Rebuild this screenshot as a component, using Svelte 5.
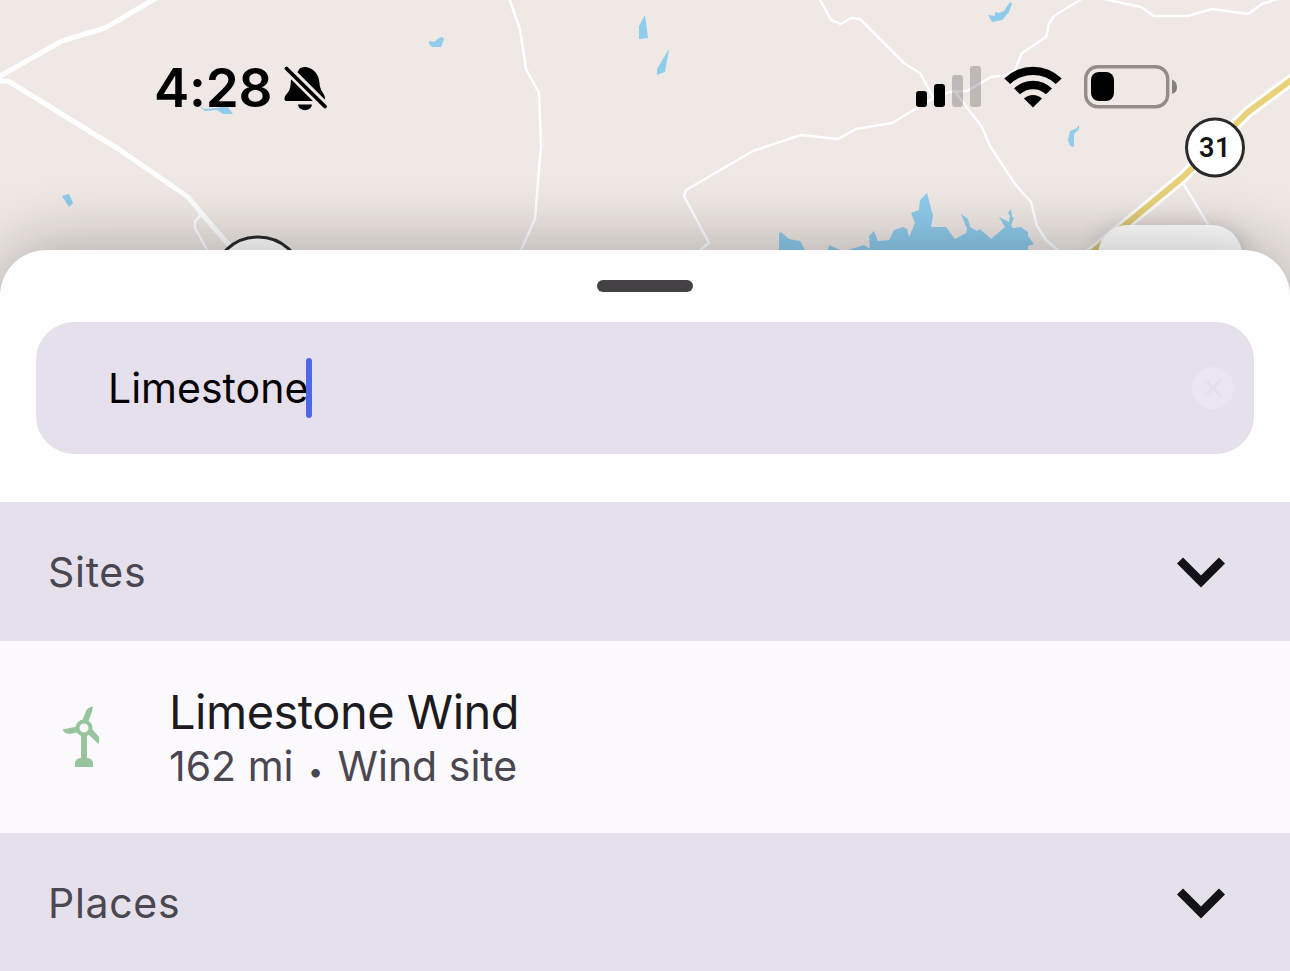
<script>
  const sections = [
    {
      title: 'Sites',
      items: [{ name: 'Limestone Wind', distance: '162 mi', kind: 'Wind site' }]
    },
    { title: 'Places', items: [] }
  ];
  let query = 'Limestone';
</script>

<div class="screen">
  <svg class="map" viewBox="0 0 1290 310" width="1290" height="310" aria-hidden="true">
    <rect width="1290" height="310" fill="#efe8e5" />
    <g fill="#8ecbec">
      <path d="M429 41l5 1 5-4 3-1 2 2-3 8h-9l-3-3z" />
      <path d="M645 15l-6 11v13l9-1z" />
      <path d="M669 49l-12 20v6l8-3z" />
      <path d="M988 15l7 1v-4l4 1 5-2 6-9 2 2-3 8-7 8-10 2z" />
      <path d="M199 106l6 3 12-1 10-2 6 8h-10l-6-4-12 1z" />
      <path d="M62 196l7-2 4 9-4 4z" />
      <path d="M1079 125v4l-5 5v13l-4-1-2-6 2-9 7-3z" />
      <path d="M779 250V233L781 232 789 239 800 241 805 250zM828 250L829 245 840 250z" />
      <path d="M848 250L864 245 870 249 869 236 874 231 878 241 889 240 894 230 903 227 907 229 909 237 915 223 911 213 919 210 920 200 927 193 933 216 931 227 946 227 955 239 966 233 967 229 961 214 968 219 970 227 977 231 980 229 991 239 1005 227 999 217 1009 222 1010 216 1008 213 1011 209 1012 216 1014 218 1011 225 1013 228 1021 227 1028 232V236L1034 244 1028 246V250z" />
    </g>
    <g fill="none" stroke="#fff" stroke-linejoin="round">
      <path stroke-width="5" d="M-5 79L62 41l43-13L158-3" />
      <path stroke-width="5" d="M-4 81H8L120 150l68 47 14 17 34 39" />
      <path stroke-width="2.5" d="M201 215l-6 6v7l13 24" />
      <path stroke-width="2.5" d="M509-2l11 31 6 40 13 24 2 52-6 74-14 31" />
      <path stroke-width="2.5" d="M699 251l10-8-25-47 2-6 67-39 48-16 37 4 18-10 36-6 40-24 17-7 18-1 24-14 15-2 9-5 7-17 24-16 3-13 5-8L1083-2" />
      <path stroke-width="2.5" d="M819-2l12 22 10 4 10-6 9 1 45 45 15 9 13 24" />
      <path stroke-width="2.5" d="M954 90l14 19 14 18 8 19 25 38 16 18 6 24 9 14 14 12" />
      <path stroke-width="2.5" d="M1104-1l37 8 13 9h34l24-7 36 5 14-10 16-5" />
      <path stroke-width="2.5" d="M1183 183l26 43" />
      <path stroke-width="12" d="M1090 254l93-77 65-65 46-34" />
    </g>
    <path d="M1090 254l93-77 65-65 46-34" fill="none" stroke="#e9d27a" stroke-width="6" />
    <g fill="#fff" stroke="#2a2a2c" stroke-width="3">
      <circle cx="1215" cy="147.500" r="28.500" />
      <ellipse cx="258" cy="277" rx="43" ry="40" />
    </g>
    <text class="route" x="1215" y="156.500">31</text>
  </svg>
  <div class="map-button"></div>

  <header class="status">
    <div class="left">
      <span class="time">4:28</span>
      <svg width="44" height="46" viewBox="0 0 44 46">
        <path d="M12 8.500C14 7 14.500 4.500 16.500 3a7.500 4.500 0 0 1 9 0c7 3 9.500 9 10 15 .3 8 5 10 5.500 15 0 2-1 3-2 3H3.500c-5 0-3-5 0-8 3-4 3-7 3.500-13z" />
        <path d="M14 39.500h14c-1 7.500-13 7.500-14 0z" />
        <path d="M2.500 3L41 41.500" stroke="#efe8e5" stroke-width="9.500" />
        <path d="M2.500 3.500L41 41.500" stroke="#000" stroke-width="3.800" stroke-linecap="round" />
      </svg>
    </div>
    <div class="right">
      <svg width="66" height="42" viewBox="0 0 66 42">
        <rect y="25" width="11" height="16" rx="3" />
        <rect x="18" y="18" width="11" height="23" rx="3" />
        <g opacity=".2">
          <rect x="36" y="9" width="11" height="32" rx="3" />
          <rect x="54" width="11" height="41" rx="3" />
        </g>
      </svg>
      <svg class="wifi" width="58" height="43" viewBox="0 0 58 43">
        <path d="M.3 13.500A41 41 0 0 1 57.700 13.500L51.800 19A33.500 33.500 0 0 0 6.200 19z" />
        <path d="M10 23.500A27 27 0 0 1 48 23.500L42 29.300A19 19 0 0 0 16 29.300z" />
        <path d="M20 33.500A13 13 0 0 1 38 33.500L29 42.500z" />
      </svg>
      <svg class="battery" width="94" height="44" viewBox="0 0 94 44">
        <rect x="1.700" y="1.700" width="82" height="40" rx="12" fill="none" stroke="#938d89" stroke-width="3.400" />
        <rect x="7" y="7" width="23" height="29" rx="8" />
        <path d="M88 14.500q5 2 5 7.500t-5 7z" fill="#87817e" />
      </svg>
    </div>
  </header>

  <main class="sheet">
    <div class="handle"></div>
    <div class="search">
      <span class="query">{query}</span><span class="caret"></span>
      <svg class="clear" width="42" height="42" viewBox="0 0 42 42">
        <circle cx="21" cy="21" r="21" fill="#eae5f0" />
        <path d="M13.500 13.500l15 15m0-15l-15 15" stroke="#e4dfea" stroke-width="3" stroke-linecap="round" />
      </svg>
    </div>
    {#each sections as section}
      <section>
        <h2>
          <span>{section.title}</span>
          <svg width="48" height="32" viewBox="0 0 48 32">
            <path d="M3 4.500l21 21L45 4.500" fill="none" stroke="#131218" stroke-width="8.600" />
          </svg>
        </h2>
        {#each section.items as item}
          <div class="item">
            <svg class="turbine" width="38" height="62" viewBox="0 0 38 62" fill="#98c49d">
              <path d="M19 28h6v26h-6z" />
              <path d="M13 61v-3q0-6 6-6h6q6 0 6 6v3z" />
              <path d="M20 15L24.500 4q2-3 6.500-3.500l-1 5-4 11zM15 20.500L.5 23.500q2 4 7 4.500l10-2zM30 23l7 8q1 3-.5 7L26 28z" />
              <circle cx="22" cy="22" r="6.500" fill="#fcfaff" stroke="#98c49d" stroke-width="4" />
            </svg>
            <div class="copy">
              <div class="name">{item.name}</div>
              <div class="detail">{item.distance} <span class="bullet">•</span> {item.kind}</div>
            </div>
          </div>
        {/each}
      </section>
    {/each}
  </main>
</div>

<style>
  :global(body) {
    margin: 0;
  }
  .screen {
    position: relative;
    width: 1290px;
    height: 971px;
    overflow: hidden;
    display: flex;
    flex-direction: column;
    font-family: Inter, 'Liberation Sans', sans-serif;
    background: #efe8e5;
  }
  svg {
    display: block;
    flex: none;
  }
  .map {
    position: absolute;
    inset: 0;
  }
  .route {
    font: 600 27px Roboto, sans-serif;
    text-anchor: middle;
    letter-spacing: 0.5px;
    fill: #151517;
  }
  .map-button {
    position: absolute;
    left: 1098px;
    top: 225px;
    width: 144px;
    height: 100px;
    border-radius: 30px;
    background: #fff;
    box-shadow: 0 3px 24px rgba(0, 0, 0, 0.22);
  }
  .status {
    position: relative;
    height: 250px;
    flex: none;
    box-sizing: border-box;
    padding: 65px 112px 0 154px;
    display: flex;
    justify-content: space-between;
    align-items: flex-start;
  }
  .left,
  .right {
    display: flex;
    align-items: flex-start;
  }
  .left {
    gap: 12px;
  }
  .time {
    width: 118px;
    font-size: 53px;
    line-height: 47px;
    font-weight: 600;
    letter-spacing: -0.2px;
    white-space: nowrap;
  }
  .right {
    gap: 22px;
    padding-top: 1px;
  }
  .wifi,
  .battery {
    margin-top: -1px;
  }
  .sheet {
    position: relative;
    flex: 1;
    border-radius: 46px 46px 0 0;
    background: #fefefe;
    box-shadow: 0 0 72px rgba(0, 0, 0, 0.31);
    display: flex;
    flex-direction: column;
  }
  .handle {
    width: 96px;
    height: 12px;
    margin: 30px auto;
    border-radius: 6px;
    background: #434144;
  }
  .search {
    height: 132px;
    margin: 0 36px 48px;
    padding: 0 20px 0 72px;
    box-sizing: border-box;
    border-radius: 38px;
    background: #e5e0eb;
    display: flex;
    align-items: center;
  }
  .query {
    font-size: 41px;
    color: #040306;
    white-space: nowrap;
  }
  .caret {
    width: 6px;
    height: 60px;
    margin-left: -2px;
    border-radius: 3px;
    background: #4f68e8;
  }
  .clear {
    margin-left: auto;
  }
  h2 {
    height: 139px;
    margin: 0;
    padding: 0 65px 0 48px;
    box-sizing: border-box;
    display: flex;
    align-items: center;
    justify-content: space-between;
    background: #e5e0eb;
    color: #4a4750;
    font-size: 41px;
    font-weight: 400;
    letter-spacing: 0.7px;
  }
  h2 svg {
    margin-top: 1px;
  }
  .item {
    height: 192px;
    display: flex;
    align-items: center;
    gap: 69px;
    padding-left: 62px;
    background: #fcfaff;
  }
  .name {
    font-size: 47px;
    line-height: 58px;
    letter-spacing: -0.5px;
    color: #1c1b20;
  }
  .detail {
    font-size: 41px;
    line-height: 50px;
    color: #4a4750;
    white-space: nowrap;
  }
  .bullet {
    display: inline-block;
    width: 21px;
    font-size: 27px;
    line-height: 1;
    text-align: center;
  }
</style>
